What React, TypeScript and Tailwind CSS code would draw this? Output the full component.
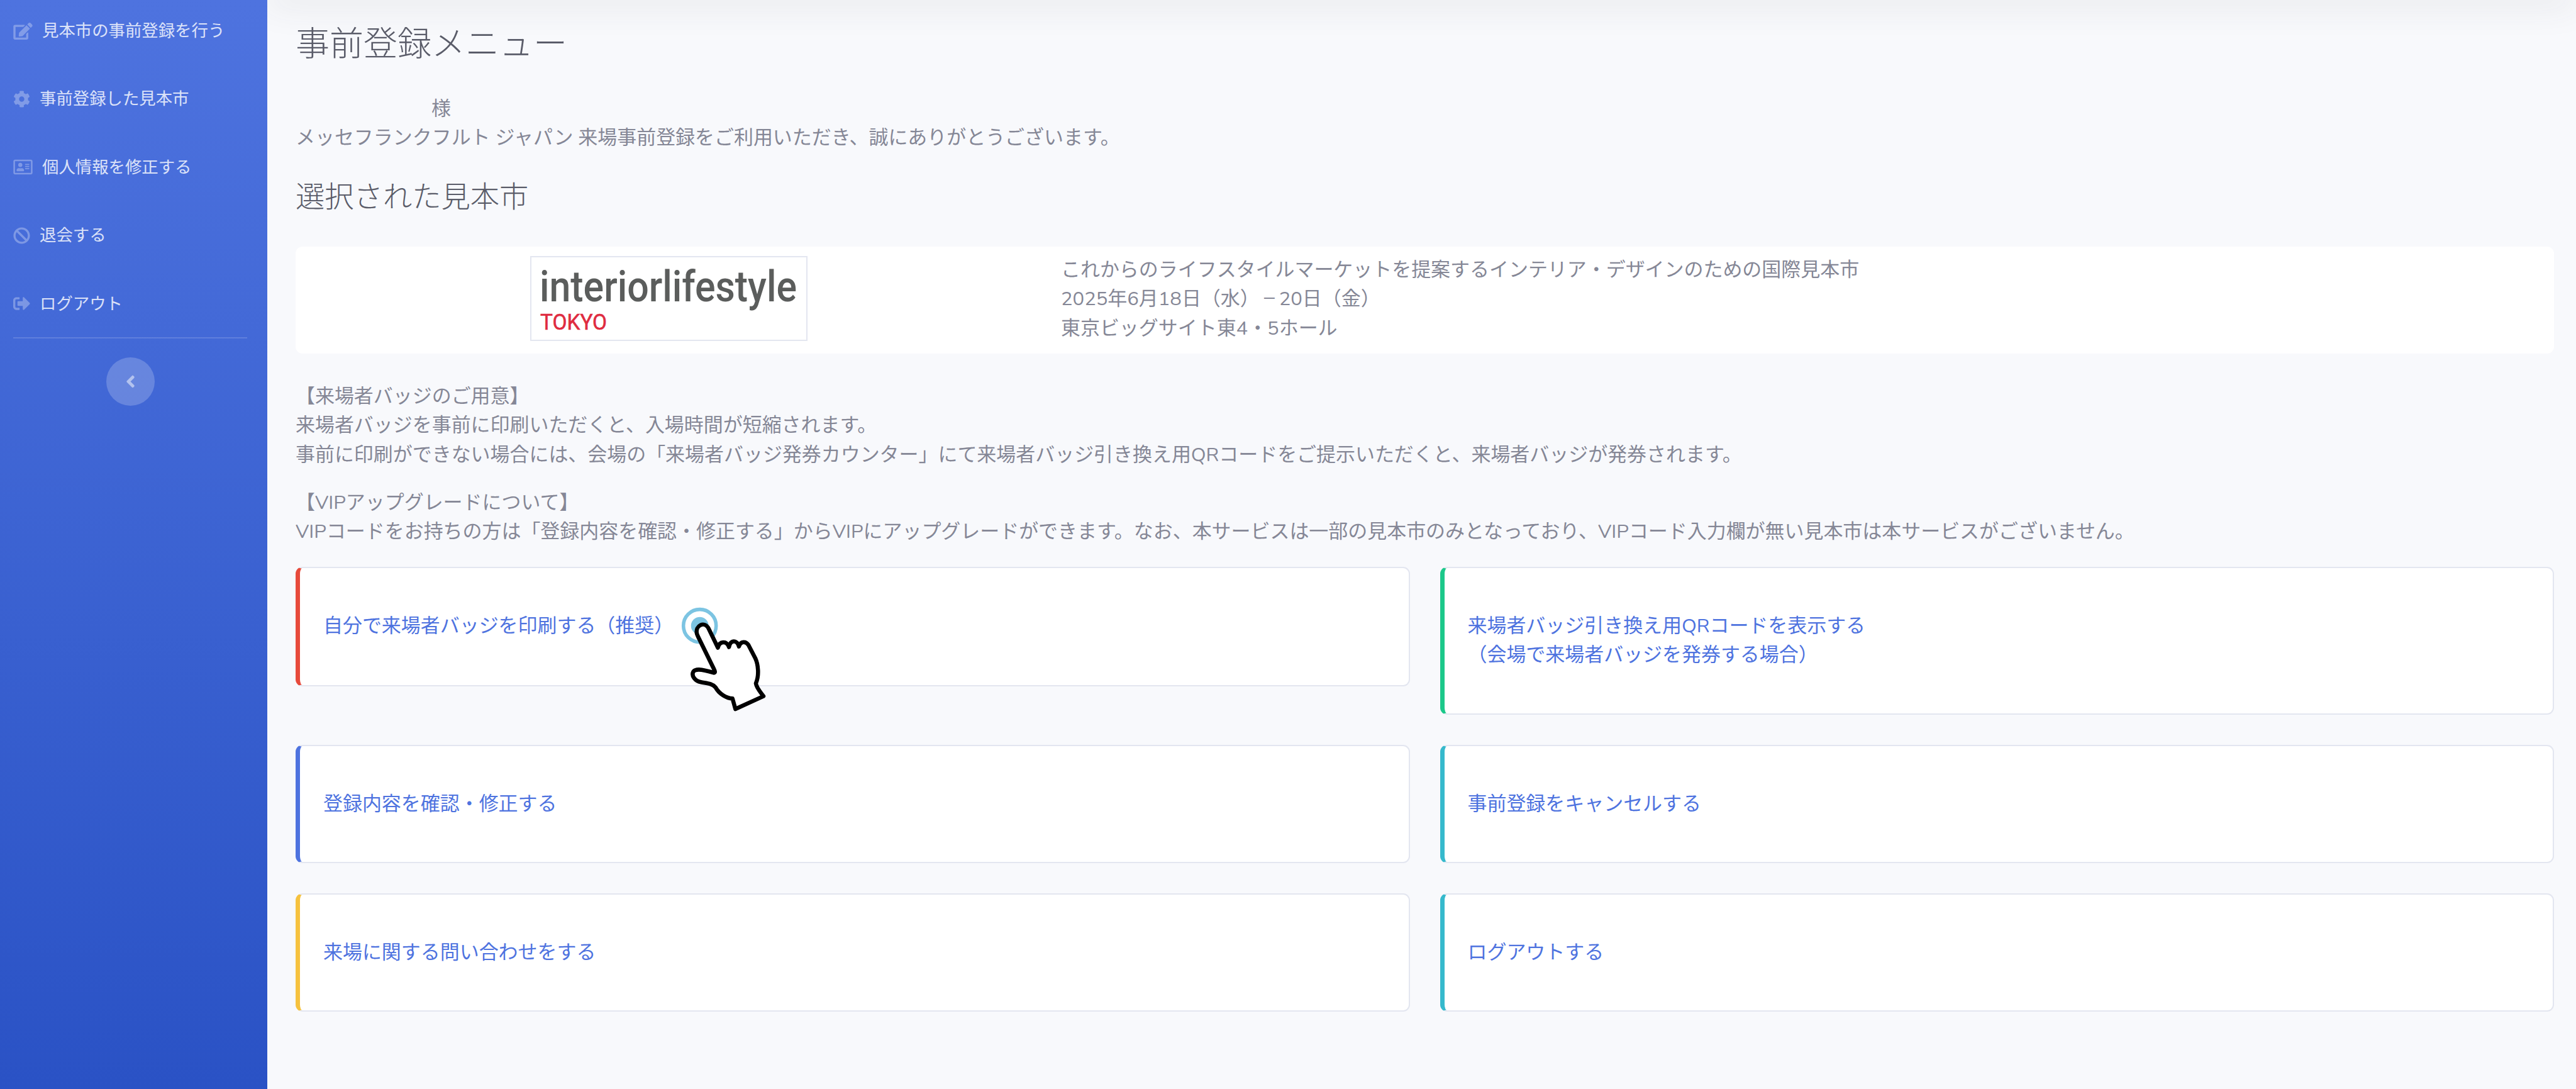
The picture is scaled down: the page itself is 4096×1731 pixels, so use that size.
import type { ReactNode } from "react";
import { FaAngleLeft, FaBan, FaCog, FaEdit, FaRegAddressCard, FaSignOutAlt } from "react-icons/fa";

const NAV = [
  { label: "見本市の事前登録を行う", icon: <FaEdit className="h-[27px] w-[31px]" /> },
  { label: "事前登録した見本市", icon: <FaCog className="h-[27px] w-[27px]" /> },
  { label: "個人情報を修正する", icon: <FaRegAddressCard className="h-[27px] w-[31px]" /> },
  { label: "退会する", icon: <FaBan className="h-[27px] w-[27px]" /> },
  { label: "ログアウト", icon: <FaSignOutAlt className="h-[27px] w-[27px]" /> },
];

function Sidebar() {
  return (
    <aside className="flex w-[425px] shrink-0 flex-col bg-linear-to-b from-[#4e73df] to-[#2a52c5] pr-[32px] pl-[21px]">
      <nav className="-mt-[5px] flex flex-col">
        {NAV.map((item) => (
          <a key={item.label} className="flex h-[108.4px] items-center gap-[15px] text-[26.4px] leading-none whitespace-nowrap text-white/80">
            <span className="text-white/30">{item.icon}</span>
            {item.label}
          </a>
        ))}
      </nav>
      <hr className="-mt-px border-t-2 border-white/15" />
      <button className="mt-[30px] ml-[148px] flex h-[77px] w-[77px] items-center justify-center rounded-full bg-white/20 text-white/50">
        <FaAngleLeft className="h-[31px] w-[31px]" />
      </button>
    </aside>
  );
}

function Logo() {
  return (
    <div className="h-[135px] w-[441px] border-2 border-[#e3e6f0] bg-white">
      <svg viewBox="0 0 437 131" className="h-full w-full overflow-visible" fontFamily="Roboto, sans-serif">
        <text x="13" y="70" fontSize="68" fontWeight="500" textLength="409" lengthAdjust="spacingAndGlyphs" fill="#5b5d5c">
          interiorlifestyle
        </text>
        <text x="14" y="115" fontSize="35" textLength="106" lengthAdjust="spacingAndGlyphs" fill="#df2b40" stroke="#df2b40" strokeWidth="0.6">
          TOKYO
        </text>
      </svg>
    </div>
  );
}

function MenuCard({ accent, children }: { accent: string; children: ReactNode }) {
  return (
    <div className={`rounded-[11px] border-2 border-l-[7px] border-[#e3e6f0] bg-white py-[69px] pl-[37px] text-[#4e73df] ${accent}`}>
      {children}
    </div>
  );
}

// Tap animation shown over the recommended menu item
function TapHand() {
  return (
    <svg viewBox="0 0 240 240" className="absolute top-[30px] left-[573px] h-[223px] w-[223px]">
      <circle cx="75" cy="68.5" r="28" fill="none" stroke="#7cc4e2" strokeWidth="6" />
      <circle cx="75" cy="68.5" r="15" fill="#7cc4e2" />
      <path
        d="M70 82 C67 68 83 60 90 73 L106 106 C109 94 121 94 125 105 C127 92 139 92 142 104 C145 94 154 95 158 101 L170 124 C175 135 177 153 171 167 C172 175 179 182 184 189 L136 211 L131 193 C121 193 108 185 102 174 C96 167 87 167 77 165 C67 163 60 154 64 147 C69 140 86 145 99 149 C102 149 101 146 99 142 L73 89 Q71 85 70 82 Z"
        fill="#fff"
        stroke="#000"
        strokeWidth="7"
        strokeLinejoin="round"
      />
    </svg>
  );
}

export default function App() {
  return (
    <div className="flex h-[1731px] w-[4096px] overflow-hidden bg-[#f8f9fc] font-['Nunito','Noto_Sans_CJK_JP',sans-serif] text-[30.96px] leading-[46.4px] text-[#858796]">
      <Sidebar />
      <main className="flex-1 overflow-hidden">
        {/* shadow of the top bar */}
        <div className="-mt-[20px] h-[20px] shadow-[0_5px_54px_0_rgba(58,59,69,0.15)]" />

        <div className="pt-[39px] pr-[35px] pl-[45px]">
          <h1 className="text-[54px] leading-[65px] font-light text-[#5a5c69]">事前登録メニュー</h1>
          <p className="mt-[46px]">
            <span className="inline-block w-[216px]" />様
            <br />
            メッセフランクフルト ジャパン 来場事前登録をご利用いただき、誠にありがとうございます。
          </p>
          <h2 className="mt-[43px] text-[46.3px] leading-[56px] font-light text-[#5a5c69]">選択された見本市</h2>

          <section className="mt-[50px] flex h-[170px] rounded-[11px] bg-white">
            <div className="flex w-[1217px] items-start pt-[15px] pl-[373px]">
              <Logo />
            </div>
            <p className="pt-[14px]">
              これからのライフスタイルマーケットを提案するインテリア・デザインのための国際見本市
              <br />
              2025年6月18日（水）<span className="inline-block scale-x-75">－</span>20日（金）
              <br />
              東京ビッグサイト東4・5ホール
            </p>
          </section>

          <p className="mt-[45px]">
            【来場者バッジのご用意】
            <br />
            来場者バッジを事前に印刷いただくと、入場時間が短縮されます。
            <br />
            事前に印刷ができない場合には、会場の「来場者バッジ発券カウンター」にて来場者バッジ引き換え用QRコードをご提示いただくと、来場者バッジが発券されます。
          </p>
          <p className="mt-[30px]">
            【VIPアップグレードについて】
            <br />
            VIPコードをお持ちの方は「登録内容を確認・修正する」からVIPにアップグレードができます。なお、本サービスは一部の見本市のみとなっており、VIPコード入力欄が無い見本市は本サービスがございません。
          </p>

          <div className="mt-[32px] grid grid-cols-2 items-start gap-[48px]">
            <div className="relative">
              <MenuCard accent="min-h-[190px] border-l-[#e74a3b]">自分で来場者バッジを印刷する（推奨）</MenuCard>
              <TapHand />
            </div>
            <MenuCard accent="border-l-[#1cc88a]">
              来場者バッジ引き換え用QRコードを表示する
              <br />
              （会場で来場者バッジを発券する場合）
            </MenuCard>
            <MenuCard accent="border-l-[#4e73df]">登録内容を確認・修正する</MenuCard>
            <MenuCard accent="border-l-[#36b9cc]">事前登録をキャンセルする</MenuCard>
            <MenuCard accent="border-l-[#f6c23e]">来場に関する問い合わせをする</MenuCard>
            <MenuCard accent="border-l-[#36b9cc]">ログアウトする</MenuCard>
          </div>
        </div>
      </main>
    </div>
  );
}
